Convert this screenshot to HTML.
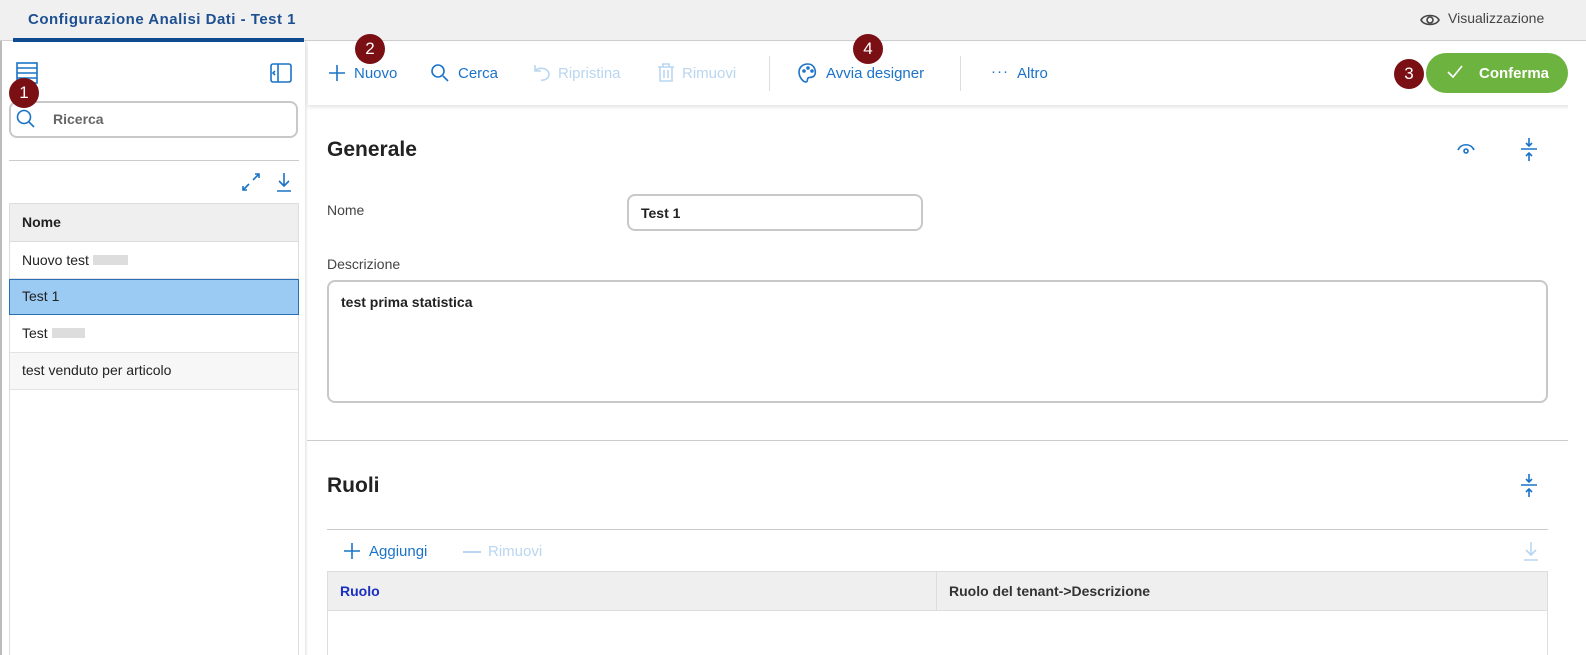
<!DOCTYPE html>
<html><head><meta charset="utf-8"><style>
*{box-sizing:border-box;margin:0;padding:0}
body{width:1586px;height:655px;overflow:hidden;background:#fff;font-family:"Liberation Sans",sans-serif;position:relative;color:#222}
.a{position:absolute}
.blue{color:#1a73c8}
.dis{color:#b9d6f0}
.badge{position:absolute;width:30px;height:30px;border-radius:50%;background:#7a0f14;color:#fff;font-size:17px;text-align:center;line-height:30px}
svg{position:absolute;fill:none;stroke:#1a73c8;stroke-width:1.6}
</style></head><body>
<div class="a" style="left:0;top:0;width:1586px;height:41px;background:#f0f0f0;border-bottom:1px solid #cfcfcf"></div>
<div class="a" style="left:28px;top:11px;font-size:15px;font-weight:bold;color:#1d4f91;letter-spacing:0.5px">Configurazione Analisi Dati - Test 1</div>
<div class="a" style="left:13px;top:38px;width:291px;height:4px;background:#0d4a8f"></div>
<svg style="left:1419px;top:11px" width="22" height="18" viewBox="0 0 22 18"><path d="M2 9C5 3 17 3 20 9C17 15 5 15 2 9Z" stroke="#444"/><circle cx="11" cy="9" r="3" stroke="#444"/></svg>
<div class="a" style="left:1448px;top:10px;font-size:14px;color:#444">Visualizzazione</div>
<div class="a" style="left:0;top:41px;width:2px;height:614px;background:#bbb"></div>
<div class="a" style="left:305px;top:41px;width:3px;height:614px;background:linear-gradient(90deg,#e6e6e6,#fff)"></div>
<svg style="left:16px;top:62px" width="22" height="22" viewBox="0 0 22 22"><rect x="1" y="1" width="20" height="20"/><path d="M1 6H21M1 11H21M1 16H21"/></svg>
<svg style="left:270px;top:63px" width="22" height="20" viewBox="0 0 22 20"><rect x="1" y="1" width="20" height="18" rx="2"/><path d="M8 1V19M5 8L3 10L5 12"/></svg>
<div class="a" style="left:9px;top:101px;width:289px;height:37px;border:2px solid #c8c8c8;border-radius:8px"></div>
<svg style="left:15px;top:108px" width="22" height="22" viewBox="0 0 22 22"><circle cx="9" cy="9" r="6.5"/><path d="M14 14L19 19"/></svg>
<div class="a" style="left:53px;top:111px;font-size:14px;font-weight:bold;color:#666">Ricerca</div>
<div class="badge" style="left:9px;top:78px">1</div>
<div class="a" style="left:9px;top:160px;width:290px;height:1px;background:#ccc"></div>
<svg style="left:240px;top:171px" width="22" height="22" viewBox="0 0 22 22"><path d="M13 9L19 3M15 3H19V7M9 13L3 19M3 15V19H7"/></svg>
<svg style="left:274px;top:171px" width="20" height="22" viewBox="0 0 20 22"><path d="M10 2V15M5 10L10 15L15 10M3 20H17"/></svg>
<div class="a" style="left:9px;top:203px;width:290px;height:452px;border:1px solid #ddd;border-bottom:none"></div>
<div class="a" style="left:10px;top:204px;width:288px;height:38px;background:#efefef;border-bottom:1px solid #ddd"></div>
<div class="a" style="left:22px;top:214px;font-size:14px;font-weight:bold">Nome</div>
<div class="a" style="left:10px;top:242px;width:288px;height:37px;border-bottom:1px solid #e3e3e3"></div>
<div class="a" style="left:22px;top:252px;font-size:14px">Nuovo test <span style="display:inline-block;width:35px;height:10px;background:#ddd"></span></div>
<div class="a" style="left:9px;top:279px;width:290px;height:36px;background:#9bcaf2;border:1px solid #2a6fb5"></div>
<div class="a" style="left:22px;top:288px;font-size:14px">Test 1</div>
<div class="a" style="left:10px;top:315px;width:288px;height:38px;border-bottom:1px solid #e3e3e3"></div>
<div class="a" style="left:22px;top:325px;font-size:14px">Test <span style="display:inline-block;width:33px;height:10px;background:#ddd"></span></div>
<div class="a" style="left:10px;top:353px;width:288px;height:37px;background:#f7f7f7;border-bottom:1px solid #e3e3e3"></div>
<div class="a" style="left:22px;top:362px;font-size:14px">test venduto per articolo</div>
<div class="a" style="left:308px;top:42px;width:1278px;height:63px;background:#fff;box-shadow:0 2px 4px rgba(0,0,0,.12)"></div>
<svg style="left:328px;top:64px" width="18" height="18" viewBox="0 0 18 18"><path d="M9 1V17M1 9H17"/></svg>
<div class="a blue" style="left:354px;top:65px;font-size:15px">Nuovo</div>
<div class="badge" style="left:355px;top:34px">2</div>
<svg style="left:430px;top:63px" width="20" height="20" viewBox="0 0 20 20"><circle cx="8" cy="8" r="6"/><path d="M13 13L18 18"/></svg>
<div class="a blue" style="left:458px;top:65px;font-size:15px">Cerca</div>
<svg style="left:532px;top:63px;stroke:#b9d6f0" width="20" height="20" viewBox="0 0 20 20"><path d="M3 2V8H9M3 8C6 4 16 4 17 11C17 15 13 18 9 17"/></svg>
<div class="a dis" style="left:558px;top:65px;font-size:15px">Ripristina</div>
<svg style="left:656px;top:62px;stroke:#b9d6f0" width="20" height="21" viewBox="0 0 20 21"><path d="M2 5H18M7 5V2H13V5M4 5V19H16V5M8 8V16M12 8V16"/></svg>
<div class="a dis" style="left:682px;top:65px;font-size:15px">Rimuovi</div>
<div class="a" style="left:769px;top:56px;width:1px;height:35px;background:#ddd"></div>
<svg style="left:797px;top:62px" width="22" height="22" viewBox="0 0 22 22"><path d="M11 2C5 2 2 6 2 10C2 15 6 20 9 20C11 20 10 17 11 16C12 15 15 16 17 14C20 11 18 2 11 2Z"/><circle cx="7" cy="9" r="1"/><circle cx="11" cy="6" r="1"/><circle cx="15" cy="9" r="1"/></svg>
<div class="a blue" style="left:826px;top:65px;font-size:15px">Avvia designer</div>
<div class="badge" style="left:853px;top:34px">4</div>
<div class="a" style="left:960px;top:56px;width:1px;height:35px;background:#ddd"></div>
<div class="a blue" style="left:991px;top:63px;font-size:15px;letter-spacing:1px">···</div>
<div class="a blue" style="left:1017px;top:65px;font-size:15px">Altro</div>
<div class="badge" style="left:1394px;top:59px">3</div>
<div class="a" style="left:1426px;top:53px;width:142px;height:40px;background:#6db33f;border-radius:20px"></div>
<svg style="left:1446px;top:64px;stroke:#fff" width="18" height="16" viewBox="0 0 18 16"><path d="M2 8L7 13L16 2"/></svg>
<div class="a" style="left:1479px;top:65px;font-size:15px;font-weight:bold;color:#fff">Conferma</div>
<div class="a" style="left:327px;top:138px;font-size:21px;font-weight:bold;color:#222">Generale</div>
<svg style="left:1455px;top:140px" width="22" height="16" viewBox="0 0 22 16"><path d="M3 10C6 3 16 3 19 10"/><circle cx="11" cy="11" r="2"/></svg>
<svg style="left:1519px;top:137px" width="20" height="26" viewBox="0 0 20 26"><path d="M10 1V9M7 6L10 9L13 6M2 12H18M10 24V16M7 19L10 16L13 19"/></svg>
<div class="a" style="left:327px;top:202px;font-size:14px;color:#444">Nome</div>
<div class="a" style="left:627px;top:194px;width:296px;height:37px;border:2px solid #c8c8c8;border-radius:8px"></div>
<div class="a" style="left:641px;top:205px;font-size:14px;font-weight:bold">Test 1</div>
<div class="a" style="left:327px;top:256px;font-size:14px;color:#444">Descrizione</div>
<div class="a" style="left:327px;top:280px;width:1221px;height:123px;border:2px solid #c8c8c8;border-radius:8px"></div>
<div class="a" style="left:341px;top:294px;font-size:14px;font-weight:bold">test prima statistica</div>
<div class="a" style="left:307px;top:440px;width:1279px;height:1px;background:#ccc"></div>
<div class="a" style="left:327px;top:474px;font-size:21px;font-weight:bold">Ruoli</div>
<svg style="left:1519px;top:473px" width="20" height="26" viewBox="0 0 20 26"><path d="M10 1V9M7 6L10 9L13 6M2 12H18M10 24V16M7 19L10 16L13 19"/></svg>
<div class="a" style="left:327px;top:529px;width:1221px;height:1px;background:#ccc"></div>
<svg style="left:343px;top:542px" width="18" height="18" viewBox="0 0 18 18"><path d="M9 1V17M1 9H17"/></svg>
<div class="a blue" style="left:369px;top:543px;font-size:15px">Aggiungi</div>
<div class="a" style="left:463px;top:551px;width:18px;height:2px;background:#b9d6f0"></div>
<div class="a dis" style="left:488px;top:543px;font-size:15px">Rimuovi</div>
<svg style="left:1521px;top:540px;stroke:#b9d6f0" width="20" height="22" viewBox="0 0 20 22"><path d="M10 2V15M5 10L10 15L15 10M3 20H17"/></svg>
<div class="a" style="left:327px;top:571px;width:1221px;height:84px;border:1px solid #ddd;border-bottom:none"></div>
<div class="a" style="left:328px;top:572px;width:1219px;height:39px;background:#efefef;border-bottom:1px solid #ddd"></div>
<div class="a" style="left:936px;top:572px;width:1px;height:39px;background:#ddd"></div>
<div class="a" style="left:340px;top:583px;font-size:14px;font-weight:bold;color:#1a2fc0">Ruolo</div>
<div class="a" style="left:949px;top:583px;font-size:14px;font-weight:bold;color:#333">Ruolo del tenant-&gt;Descrizione</div>
<div class="a" style="left:1568px;top:105px;width:18px;height:550px;background:#fff"></div>
</body></html>
